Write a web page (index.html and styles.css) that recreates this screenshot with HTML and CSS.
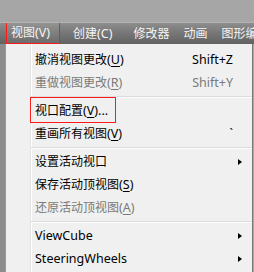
FILE: index.html
```html
<!DOCTYPE html>
<html lang="zh">
<head>
<meta charset="utf-8">
<link rel="stylesheet" href="styles.css">
</head>
<body>
<div class="screen">
  <div class="topstrip"></div>
  <nav class="menubar">
    <span class="mi sel">视图<span class="lat">(V)</span></span>
    <span class="mi acc">创建<span class="lat">(C)</span></span>
    <span class="mi">修改器</span>
    <span class="mi">动画</span>
    <span class="mi">图形编辑器</span>
  </nav>
  <div class="below">
    <div class="leftstrip"></div>
    <div class="dropdown">
      <div class="item"><span class="label">撤消视图更改<span class="lat">(<u>U</u>)</span></span><span class="sc lat">Shift+Z</span><span class="arr"></span></div>
      <div class="item off"><span class="label">重做视图更改<span class="lat">(<u>R</u>)</span></span><span class="sc lat">Shift+Y</span><span class="arr"></span></div>
      <div class="sep"></div>
      <div class="item"><span class="label mark">视口配置<span class="lat">(<u>V</u>)...</span></span><span class="sc"></span><span class="arr"></span></div>
      <div class="item"><span class="label">重画所有视图<span class="lat">(<u>V</u>)</span></span><span class="sc lat">`</span><span class="arr"></span></div>
      <div class="sep"></div>
      <div class="item"><span class="label">设置活动视口</span><span class="sc"></span><span class="arr"><i class="tri"></i></span></div>
      <div class="item"><span class="label">保存活动顶视图<span class="lat">(<u>S</u>)</span></span><span class="sc"></span><span class="arr"></span></div>
      <div class="item off"><span class="label">还原活动顶视图<span class="lat">(<u>A</u>)</span></span><span class="sc"></span><span class="arr"></span></div>
      <div class="sep"></div>
      <div class="item"><span class="label lat">ViewCube</span><span class="sc"></span><span class="arr"><i class="tri"></i></span></div>
      <div class="item"><span class="label lat">SteeringWheels</span><span class="sc"></span><span class="arr"><i class="tri"></i></span></div>
    </div>
    <div class="rightstrip"></div>
  </div>
</div>
</body>
</html>
```
FILE: styles.css
```css
html, body {
  margin: 0;
  padding: 0;
}
body {
  width: 254px;
  height: 272px;
  overflow: hidden;
  background: #a6a6a6;
  font-family: "Noto Sans", "Noto Sans CJK SC", sans-serif;
  font-size: 12px;
  color: #000;
}
.screen {
  width: 254px;
  height: 272px;
  display: flex;
  flex-direction: column;
}
.topstrip {
  height: 22px;
  flex: none;
  background: #a6a6a6;
}
.menubar {
  height: 22px;
  flex: none;
  display: flex;
  align-items: stretch;
  padding-left: 6px;
  background: linear-gradient(#8e8e8e 0, #7a7a7a 40%, #626262 100%);
  border-top: 1px solid #b4b4b4;
  box-sizing: border-box;
  color: #f4f4f4;
  white-space: nowrap;
  overflow: hidden;
}
.mi {
  display: flex;
  align-items: center;
  padding: 0 7px;
  line-height: 20px;
}
.mi.sel {
  border: 1px solid #ff1a1a;
  padding: 0 9px 0 4px;
  margin-top: -1px;
  background: rgba(255, 255, 255, 0.06);
}
.mi.acc {
  padding-right: 14px;
}
.mi.sel + .mi {
  padding-left: 13px;
}
.lat {
  font-size: 12.5px;
}
.below {
  flex: 1;
  display: flex;
  min-height: 0;
}
.leftstrip {
  width: 5px;
  flex: none;
  background: #8c8c8c;
}
.rightstrip {
  width: 1px;
  flex: none;
  background: #a6a6a6;
}
.dropdown {
  flex: 1;
  border-left: 1px solid #9a9a9a;
  border-right: 1px solid #7a7a7a;
  padding-top: 4px;
  background: linear-gradient(to right, #f0f0f0 0, #f0f0f0 24px, #e2e3e3 24px, #e2e3e3 25px, #ffffff 25px, #ffffff 26px, #f0f0f0 26px);
}
.item {
  height: 23px;
  display: grid;
  grid-template-columns: 1fr auto 19px;
  align-items: center;
  padding-left: 29px;
  white-space: nowrap;
}
.item.off {
  color: #7a7a7a;
}
.label {
  line-height: 23px;
}
.sc {
  text-align: right;
  line-height: 23px;
}
.arr {
  display: flex;
  align-items: center;
  padding-left: 5px;
}
.tri {
  display: block;
  width: 0;
  height: 0;
  border-left: 4px solid #000;
  border-top: 3.5px solid transparent;
  border-bottom: 3.5px solid transparent;
}
u {
  text-decoration: underline;
  text-underline-offset: 2px;
  text-decoration-thickness: 1px;
}
.sep {
  height: 5px;
  margin-left: 25px;
  box-sizing: border-box;
  border-top: 2px solid transparent;
  position: relative;
}
.sep::before {
  content: "";
  display: block;
  height: 1px;
  background: #dcdcdc;
}
.sep::after {
  content: "";
  display: block;
  height: 1px;
  background: #ffffff;
}
.mark {
  position: relative;
  justify-self: start;
}
.mark::after {
  content: "";
  position: absolute;
  top: -2px;
  bottom: -1px;
  left: -5px;
  right: -8px;
  border: 1px solid #ff1a1a;
}
```
